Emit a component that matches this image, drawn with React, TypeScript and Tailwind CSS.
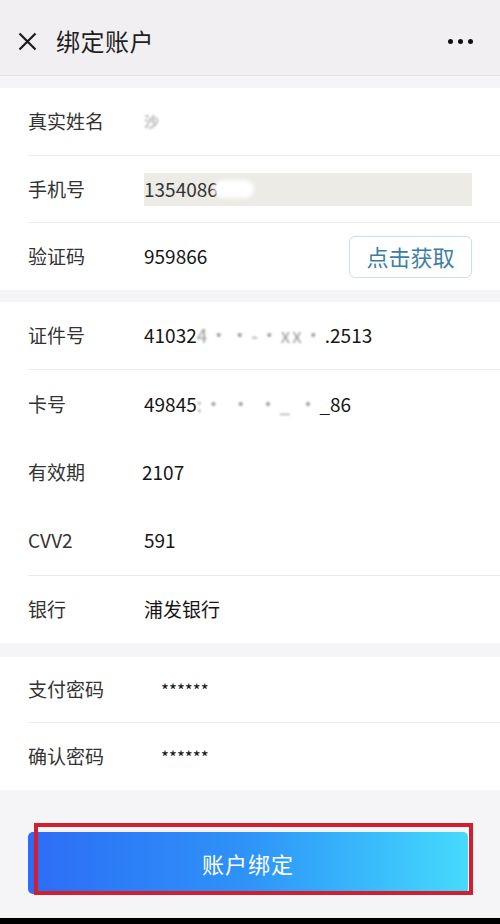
import React from 'react';

const font = {fontFamily: '"Noto Sans CJK SC", "Liberation Sans", sans-serif'};

interface RowProps {
  label: string;
  children?: React.ReactNode;
  divider?: boolean;
  heightClass?: string;
  valueClass?: string;
}

const Row: React.FC<RowProps> = ({label, children, divider, heightClass, valueClass}) => {
  return (
    <div className="pl-[28px]">
      <div
        className={`flex items-center ${heightClass ?? 'h-[67px]'} ${divider ? 'border-b border-[#ebebee]' : ''}`}
      >
        <div className="w-[116px] text-[19px] text-[#333]">{label}</div>
        <div className={`flex-1 flex items-center text-[19px] text-[#161616] ${valueClass ?? ''}`}>
          {children}
        </div>
      </div>
    </div>
  );
};

const Blur: React.FC<{text: string}> = ({text}) => (
  <span className="text-[#9a9a9a] blur-[1.2px] tracking-[2px]">{text}</span>
);

export default function App() {
  return (
    <div className="w-[500px] h-[924px] bg-[#f5f4f7] flex flex-col overflow-hidden" style={font}>
      {/* header */}
      <div className="h-[76px] pt-[7px] bg-[#f1eff2] flex items-center px-[18px] border-b border-[#e6e4e8]">
        <svg width="19" height="19" viewBox="0 0 19 19" className="mt-[1px]">
          <path d="M1.5 1.5 L17.5 17.5 M17.5 1.5 L1.5 17.5" stroke="#1a1a1a" strokeWidth="2.2" />
        </svg>
        <div className="ml-[19px] text-[24px] text-[#1e1e1e] tracking-[0.5px]">绑定账户</div>
        <div className="ml-auto flex gap-[5px] mr-[9px]">
          <span className="w-[5px] h-[5px] rounded-full bg-[#111]" />
          <span className="w-[5px] h-[5px] rounded-full bg-[#111]" />
          <span className="w-[5px] h-[5px] rounded-full bg-[#111]" />
        </div>
      </div>

      {/* section 1 */}
      <div className="mt-[12px] bg-white">
        <Row label="真实姓名" divider heightClass="h-[68px]">
          <span className="text-[#888] blur-[1px] text-[15px]">沙</span>
        </Row>
        <Row label="手机号" divider>
          <div className="h-[33px] w-[328px] bg-[#ecebe6] flex items-center text-[#333]">
            <span>1354086</span>
            <span className="ml-[-4px] w-[40px] h-[18px] rounded-full bg-white blur-[2px]" />
          </div>
        </Row>
        <Row label="验证码">
          <span>959866</span>
          <button className="ml-auto mr-[28px] w-[123px] h-[42px] rounded-[6px] border border-[#cfdde4] bg-white text-[22px] text-[#3d7ea6]">
            点击获取
          </button>
        </Row>
      </div>

      {/* section 2 */}
      <div className="mt-[12px] bg-white">
        <Row label="证件号" divider heightClass="h-[68px]">
          <span>41032</span>
          <Blur text="4··-·xx·" />
          <span>.2513</span>
        </Row>
        <Row label="卡号" heightClass="h-[68px]">
          <span>49845</span>
          <Blur text=":·  ·  ·_ ·" />
          <span>_86</span>
        </Row>
        <Row label="有效期" heightClass="h-[68px]" valueClass="-ml-[2px]">
          <span>2107</span>
        </Row>
        <Row label="CVV2" divider heightClass="h-[70px]">
          <span>591</span>
        </Row>
        <Row label="银行" heightClass="h-[67px]">
          <span>浦发银行</span>
        </Row>
      </div>

      {/* section 3 */}
      <div className="mt-[14px] bg-white">
        <Row label="支付密码" divider heightClass="h-[66px]" valueClass="pl-[17px]">
          <span className="text-[17px]">******</span>
        </Row>
        <Row label="确认密码" valueClass="pl-[17px]">
          <span className="text-[17px]">******</span>
        </Row>
      </div>

      {/* submit */}
      <div className="relative mt-[42px] mx-[28px]">
        <button className="w-[440px] h-[62px] rounded-[5px] bg-gradient-to-r from-[#2d6cf6] via-[#2f93f8] to-[#46dafc] text-white text-[22px] tracking-[1px]">
          账户绑定
        </button>
        <div className="absolute left-[6px] top-[-9px] w-[439px] h-[72px] border-[4px] border-[#d21f2f]" />
      </div>

      <div className="mt-auto h-[6px] bg-black" />
    </div>
  );
}
